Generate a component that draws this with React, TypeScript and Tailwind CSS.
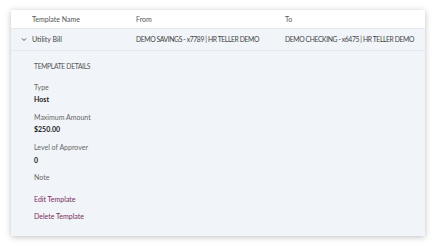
import React from "react";

export default function App() {
  const font = { fontFamily: "Lato, 'Noto Sans', sans-serif" };
  return (
    <div className="w-[436px] h-[247px] bg-white pt-[10px] pl-[11px]" style={font}>
      <div className="w-[414px] h-[226px] bg-[#f1f5f9] shadow-[0_1px_6px_rgba(0,0,0,0.25)] flex flex-col">
        <div className="grid grid-cols-[125px_149px_1fr] h-[19px] items-center bg-white border-b border-[#e3e8ee] text-[7px] text-[#555]">
          <div className="pl-[21px]">Template Name</div>
          <div>From</div>
          <div>To</div>
        </div>
        <div className="grid grid-cols-[125px_149px_1fr] h-[22px] items-center border-b border-[#e3e8ee] text-[7px] text-[#444]">
          <div className="flex items-center pl-[8px]">
            <svg width="13" height="8" viewBox="0 0 13 8" className="shrink-0">
              <path d="M3 2.5 L5 4.5 L7 2.5" fill="none" stroke="#555" strokeWidth="1" />
            </svg>
            <span>Utility Bill</span>
          </div>
          <div className="whitespace-nowrap text-[6.8px] tracking-[-0.4px]">DEMO SAVINGS - x7789 | HR TELLER DEMO</div>
          <div className="whitespace-nowrap text-[6.8px] tracking-[-0.4px]">DEMO CHECKING - x6475 | HR TELLER DEMO</div>
        </div>
        <div className="flex flex-col pl-[23px] pt-[10px] text-[7px]">
          <div className="h-[10px] leading-[10px] text-[#555] text-[6.7px] tracking-[-0.3px]">TEMPLATE DETAILS</div>
          <div className="h-[10px] leading-[10px] mt-[11px] text-[#666]">Type</div>
          <div className="h-[10px] leading-[10px] mt-[2px] font-bold text-[#222]">Host</div>
          <div className="h-[10px] leading-[10px] mt-[8px] text-[#666]">Maximum Amount</div>
          <div className="h-[10px] leading-[10px] mt-[2px] font-bold text-[#222]">$250.00</div>
          <div className="h-[10px] leading-[10px] mt-[8px] text-[#666]">Level of Approver</div>
          <div className="h-[10px] leading-[10px] mt-[3px] font-bold text-[#222]">0</div>
          <div className="h-[10px] leading-[10px] mt-[7px] text-[#666]">Note</div>
          <div className="h-[10px] leading-[10px] mt-[12px] text-[#7b2b5c]">Edit Template</div>
          <div className="h-[10px] leading-[10px] mt-[7px] text-[#7b2b5c]">Delete Template</div>
        </div>
      </div>
    </div>
  );
}
